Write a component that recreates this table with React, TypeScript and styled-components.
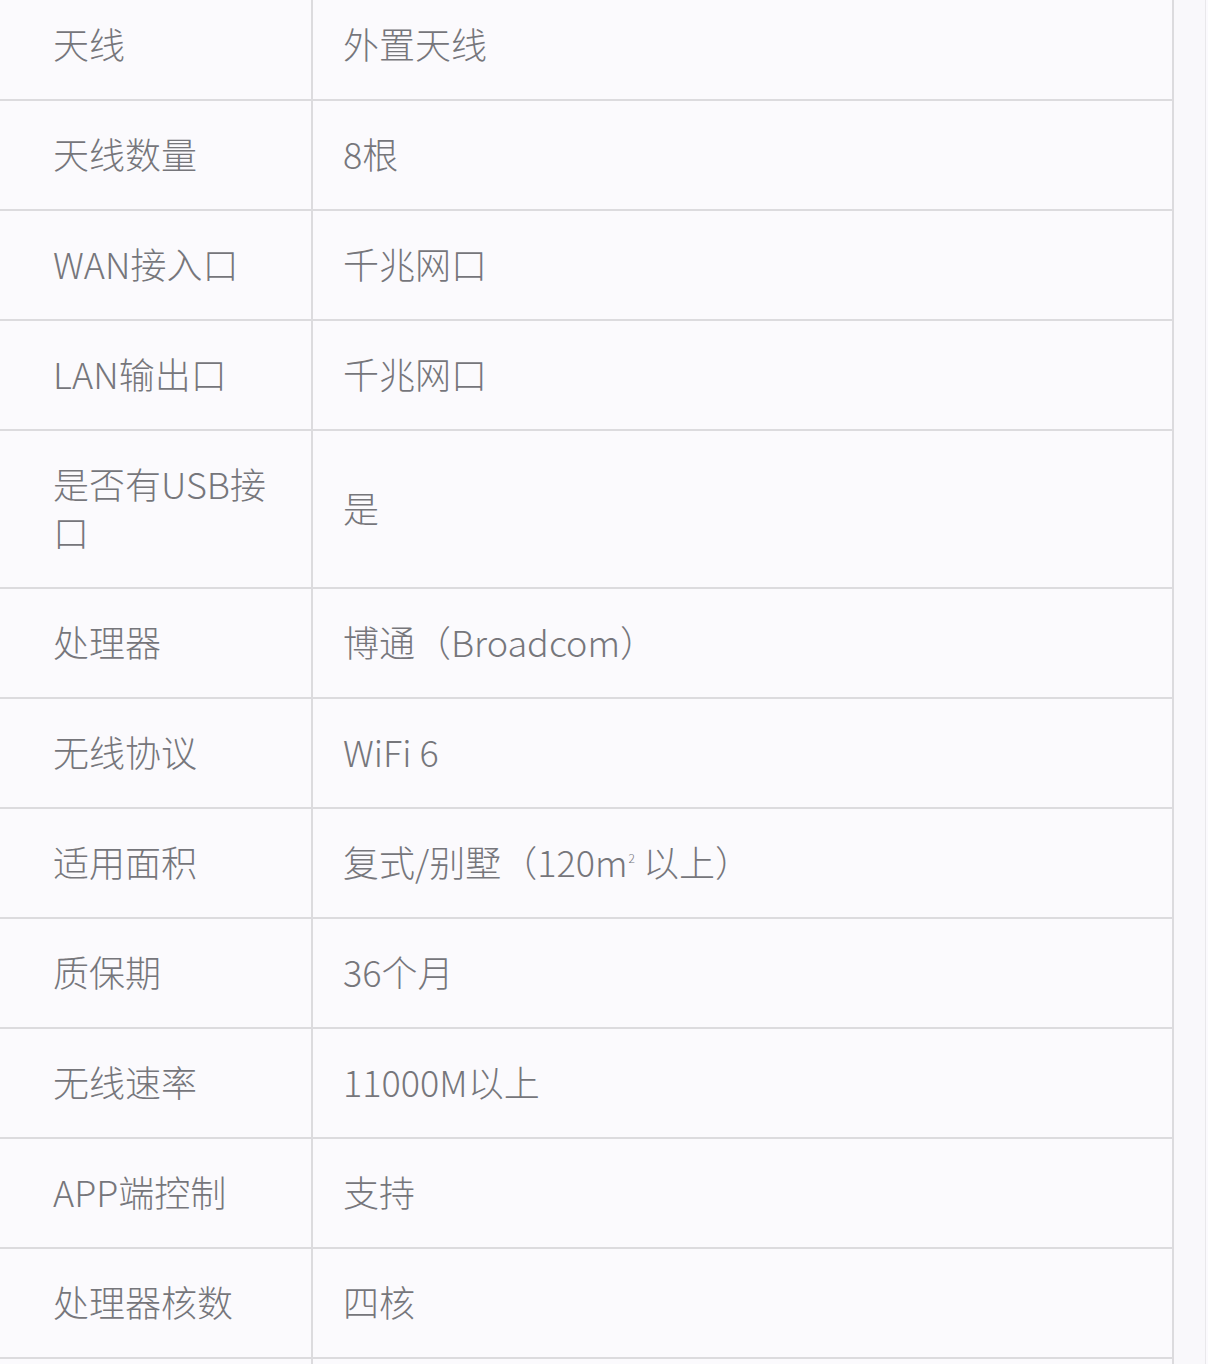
import type { ReactNode } from "react";
import styled, { createGlobalStyle } from "styled-components";

const borderColor = "#dcdbde";
const bgColor = "#fbfafd";
const textColor = "#76767b";

const GlobalStyle = createGlobalStyle`
  html, body {
    margin: 0;
    padding: 0;
    background: ${bgColor};
    overflow: hidden;
  }
  body {
    font-family: "Noto Sans CJK SC", "Noto Sans", sans-serif;
  }
`;

const Page = styled.div`
  display: flex;
  width: 1208px;
  height: 1364px;
  overflow: hidden;
  background: ${bgColor};
`;

const SpecTable = styled.div`
  width: 1174px;
  flex-shrink: 0;
  margin-top: -9px;
  display: flex;
  flex-direction: column;
`;

const Row = styled.div`
  display: grid;
  grid-template-columns: 313px 1fr;
  border-bottom: 2px solid ${borderColor};
  border-right: 2px solid ${borderColor};
`;

const Cell = styled.div`
  font-size: 36px;
  font-weight: 300;
  line-height: 48px;
  color: ${textColor};
  padding: 28px 31px 32px;
  display: flex;
  align-items: center;
  min-height: 48px;
`;

const Label = styled(Cell)`
  padding-left: 53px;
  border-right: 2px solid ${borderColor};
`;

const Value = styled(Cell)`
  padding-left: 30px;
`;

const Sup = styled.sup`
  font-size: 12px;
  line-height: 0;
  vertical-align: 0;
  position: relative;
  top: -14px;
  margin-left: 1px;
`;

const SideStrip = styled.div`
  width: 31px;
  flex-shrink: 0;
  background: #f9f8fb;
  border-right: 1px solid #e9e8eb;
`;

type Spec = { label: string; value: ReactNode };

const getSpecs = (): Spec[] => [
  { label: "天线", value: "外置天线" },
  { label: "天线数量", value: "8根" },
  { label: "WAN接入口", value: "千兆网口" },
  { label: "LAN输出口", value: "千兆网口" },
  { label: "是否有USB接口", value: "是" },
  { label: "处理器", value: "博通（Broadcom）" },
  { label: "无线协议", value: "WiFi 6" },
  {
    label: "适用面积",
    value: (
      <span>
        复式/别墅（120m<Sup>2</Sup> 以上）
      </span>
    ),
  },
  { label: "质保期", value: "36个月" },
  { label: "无线速率", value: "11000M以上" },
  { label: "APP端控制", value: "支持" },
  { label: "处理器核数", value: "四核" },
  { label: "", value: "" },
];

const App = () => {
  const specs = getSpecs();
  return (
    <>
      <GlobalStyle />
      <Page>
        <SpecTable>
          {specs.map((spec, i) => (
            <Row key={i}>
              <Label>{spec.label}</Label>
              <Value>{spec.value}</Value>
            </Row>
          ))}
        </SpecTable>
        <SideStrip />
      </Page>
    </>
  );
};

export default App;
